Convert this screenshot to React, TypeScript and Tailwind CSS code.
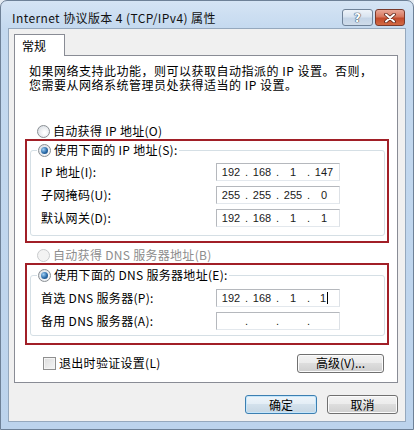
import { Fragment, type ReactNode } from 'react';

// Win7 风格的单选框
function Radio({ checked, disabled }: { checked?: boolean; disabled?: boolean }) {
  return (
    <span
      className={`flex h-[13px] w-[13px] shrink-0 items-center justify-center rounded-full border ${
        disabled
          ? 'border-[#c9cbcd] bg-[#f3f3f3]'
          : 'border-[#8a8f94] bg-[radial-gradient(circle_at_60%_60%,#ffffff_10%,#d6dbe1_90%)]'
      }`}
    >
      {checked && (
        <span className="h-[7px] w-[7px] rounded-full bg-[radial-gradient(circle_at_35%_35%,#9fd0f5,#2a6aa8_55%,#123f6e)]" />
      )}
    </span>
  );
}

function IpBox({ parts, caret }: { parts: string[]; caret?: boolean }) {
  return (
    <div className="flex h-[18px] w-[124px] items-center border border-[#b5b8bd] border-r-[#dde1e6] border-b-[#e3e8ed] bg-white pl-px font-['Liberation_Sans',Arial,sans-serif] text-[11px] leading-[14px] text-[#1a1a1a]">
      {parts.map((p, i) => (
        <Fragment key={i}>
          {i > 0 && <span className="w-[5px] text-center">.</span>}
          <span className="flex w-[26px] items-center justify-center">
            {p}
            {caret && i === parts.length - 1 && <span className="ml-px h-[12px] w-px bg-black" />}
          </span>
        </Fragment>
      ))}
    </div>
  );
}

function Field({ label, parts, caret }: { label: string; parts: string[]; caret?: boolean }) {
  return (
    <div className="flex h-[23px] items-center pl-[10px]">
      <span className="w-[175px] leading-[14px] tracking-[0.3px]">{label}</span>
      <IpBox parts={parts} caret={caret} />
    </div>
  );
}

function Button({ children, className, primary }: { children: ReactNode; className: string; primary?: boolean }) {
  return (
    <button
      className={`flex h-[19px] items-center justify-center rounded-[3px] border leading-[14px] ${
        primary
          ? 'border-[#3c7fb1] bg-[linear-gradient(#eef5fa,#e3edf5_50%,#d3e1ec_50%,#c6d6e3)] shadow-[inset_0_0_0_1px_#c5e6fb]'
          : 'border-[#707070] bg-[linear-gradient(#f2f2f2,#ebebeb_50%,#dddddd_50%,#cfcfcf)] shadow-[inset_0_0_0_1px_#fbfbfb]'
      } ${className}`}
    >
      {children}
    </button>
  );
}

export default function App() {
  return (
    <div className="h-[430px] w-[414px] overflow-hidden bg-[#e4ebf2] font-['Noto_Sans_CJK_SC','Noto_Sans',sans-serif] text-[12px] text-black">
      <div className="flex h-full flex-col rounded-t-[7px] border border-[#6e8197] bg-[linear-gradient(180deg,#d5e4f4_0px,#c4d9ef_28px,#bcd3ec_100%)] px-[7px] pb-[7px]">
        {/* Title bar */}
        <div className="flex h-[27px] shrink-0 items-start justify-between">
          <span className="mt-[10px] pl-[4px] leading-[14px] tracking-[0.4px] text-[#111]">
            Internet 协议版本 4 (TCP/IPv4) 属性
          </span>
          <div className="mr-[1px] mt-[8px] flex gap-[2px]">
            <span className="flex h-[17px] w-[31px] items-center justify-center rounded-[3px] border border-[#6f8298] bg-[linear-gradient(#eef3f9,#d9e4f0_45%,#c4d4e6_55%,#cfdcea)] font-['DejaVu_Sans',sans-serif] text-[12px] leading-none font-bold text-white [text-shadow:0_0_1px_#34485f,0_0_1px_#34485f,0_0_1px_#34485f]">
              ?
            </span>
            <span className="flex h-[17px] w-[30px] items-center justify-center rounded-[3px] border border-[#7a3a2c] bg-[linear-gradient(#e9a797,#d7785f_45%,#c24a2b_55%,#d26a45)]">
              <svg width="12" height="10" viewBox="0 0 12 10">
                <path d="M2 1.5 L10 8.5 M10 1.5 L2 8.5" stroke="#5b2418" strokeWidth="3.6" strokeLinecap="round" />
                <path d="M2 1.5 L10 8.5 M10 1.5 L2 8.5" stroke="#ffffff" strokeWidth="2" strokeLinecap="round" />
              </svg>
            </span>
          </div>
        </div>

        {/* Client area */}
        <div className="flex flex-1 flex-col border border-[#95a8bd] bg-[#f0f0f0] pl-[5px] pr-[7px] pt-[5px]">
          {/* Tab */}
          <div className="relative z-10 -mb-px flex h-[22px] w-[51px] items-center border border-b-0 border-[#898c95] bg-white pl-[7px] leading-[14px]">
            常规
          </div>

          {/* Panel */}
          <div className="flex h-[328px] flex-col border border-[#898c95] bg-white pt-[8px]">
            <div className="pl-[14px] tracking-[0.5px]">
              <div className="h-[14px] leading-[14px]">如果网络支持此功能，则可以获取自动指派的 IP 设置。否则，</div>
              <div className="h-[14px] leading-[14px]">您需要从网络系统管理员处获得适当的 IP 设置。</div>
            </div>

            <div className="mt-[31px] flex h-[16px] items-center gap-[3px] pl-[22px]">
              <Radio />
              <span className="leading-[14px] tracking-[0.3px]">自动获得 IP 地址(O)</span>
            </div>

            <div className="ml-[10px] h-[104px] w-[364px] border-2 border-[#a11f27]">
              <fieldset className="ml-[3px] mt-px w-[355px] rounded-[3px] border border-[#d5dfe5] pb-[6px]">
                <legend className="ml-[6px] flex h-[16px] items-center gap-[3px] px-px">
                  <Radio checked />
                  <span className="leading-[14px] tracking-[0.3px]">使用下面的 IP 地址(S):</span>
                </legend>
                <div className="mt-[2px]">
                  <Field label="IP 地址(I):" parts={['192', '168', '1', '147']} />
                  <Field label="子网掩码(U):" parts={['255', '255', '255', '0']} />
                  <Field label="默认网关(D):" parts={['192', '168', '1', '1']} />
                </div>
              </fieldset>
            </div>

            <div className="mt-[4px] flex h-[16px] items-center gap-[3px] pl-[22px] text-[#8d8d8d]">
              <Radio disabled />
              <span className="leading-[14px] tracking-[0.3px]">自动获得 DNS 服务器地址(B)</span>
            </div>

            <div className="ml-[10px] h-[82px] w-[364px] border-2 border-[#a11f27]">
              <fieldset className="ml-[3px] mt-[2px] w-[355px] rounded-[3px] border border-[#d5dfe5] pb-[3px]">
                <legend className="ml-[6px] flex h-[16px] items-center gap-[3px] px-px">
                  <Radio checked />
                  <span className="leading-[14px] tracking-[0.3px]">使用下面的 DNS 服务器地址(E):</span>
                </legend>
                <div className="mt-[3px]">
                  <Field label="首选 DNS 服务器(P):" parts={['192', '168', '1', '1']} caret />
                  <Field label="备用 DNS 服务器(A):" parts={['', '', '', '']} />
                </div>
              </fieldset>
            </div>

            <div className="mt-[9px] flex h-[18px] items-center justify-between pl-[28px] pr-[13px]">
              <div className="flex items-center gap-[3px]">
                <span className="h-[13px] w-[13px] border border-[#8f8f8f] bg-[linear-gradient(135deg,#dcdcdc,#f6f6f6)] shadow-[inset_0_0_0_1px_#f4f4f4]" />
                <span className="leading-[14px] tracking-[0.3px]">退出时验证设置(L)</span>
              </div>
              <Button className="h-[18px] w-[87px]">高级(V)...</Button>
            </div>
          </div>

          {/* Dialog buttons */}
          <div className="mt-[12px] flex justify-end gap-[10px]">
            <Button primary className="w-[72px]">
              确定
            </Button>
            <Button className="w-[71px]">取消</Button>
          </div>
        </div>
      </div>
    </div>
  );
}
